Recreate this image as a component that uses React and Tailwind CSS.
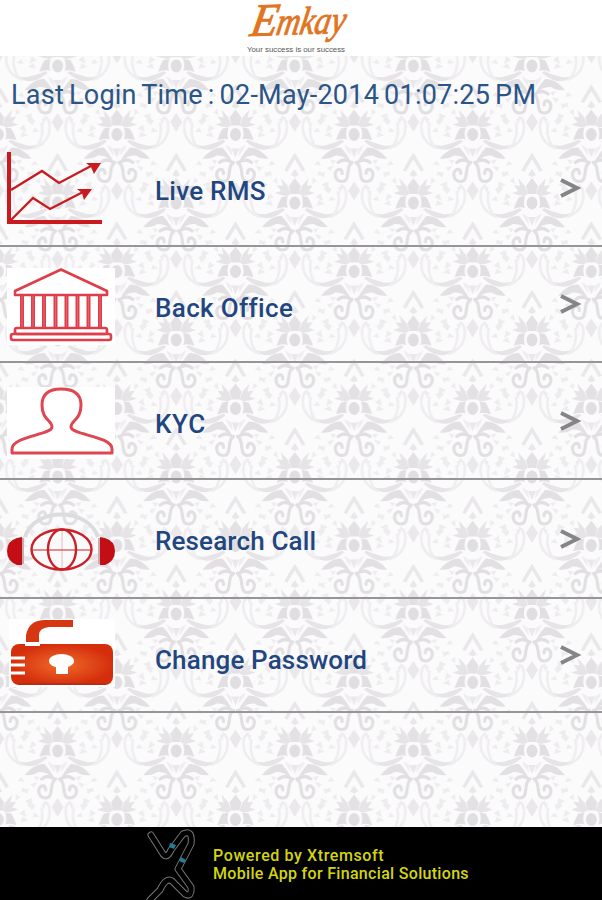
function Motif({ x, y }) {
    return (
        <g transform={`translate(${x} ${y})`}>
            <ellipse rx="5.5" ry="6.5" fill="#e0dee1" />
            <path d="M0-25 6-17 4-9H-4L-6-17Z" fill="#e3e1e4" />
            <path d="M-4 14H4L0 23ZM0 47 6 56 0 66-6 56Z" fill="#eae8eb" />
            <path d="M-9-32Q-5-39 0-47Q5-39 9-32" fill="none" stroke="#e9e7ea" strokeWidth="3.5" />
            <path d="M0-34 4-28 0-26-4-28Z" fill="#e9e7ea" />
            <MotifHalf />
            <g transform="scale(-1 1)">
                <MotifHalf />
            </g>
        </g>
    );
}

function MotifHalf() {
    return (
        <g>
            <path d="M-18 6Q-17 1-13-6L-7-7Q-9 0-7 5Q-12 3-18 6Z" fill="#e1dfe2" />
            <path d="M-20-10-14-12-18-18-12-17-14-25-7-17-4-9-8-7-14-8Z" fill="#e6e4e7" />
            <path d="M-1 32Q-5 22-13 13Q-23 12-33 24Q-25 25-19 21Q-11 20-5 27Z" fill="#e2e0e3" />
            <path d="M-2 28C-9 31-3 47-12 47C-19 47-21 38-16 35Q-12 34-12 39M-3 28Q-10 23-16 28" fill="none" stroke="#e1dfe2" strokeWidth="3.2" strokeLinecap="round" />
            <path d="M-10 7Q-16 12-21 14Q-34 18-41 9Q-34 13-26 10Q-18 8-12 5Z" fill="#e6e4e7" />
            <path d="M-35 14Q-49 9-51-3T-46-18M-40 10Q-46 0-43-12" fill="none" stroke="#efedf0" strokeWidth="2.6" />
            <path d="M-10 10-4 14-3 22-8 15Z" fill="#efedf0" />
            <path d="M-37-14-31-18-29-14-34-9ZM-27 33-20 31-24 37ZM-35 40-29 37-30 43ZM-29-30-24-32-23-27ZM-30 1-24-3-22 3ZM-26-10-21-6-28-2ZM-33 50-26 47-25 55ZM-16 53-11 51-14 59ZM-41-3-36-7-34-2ZM-40 30-36 26-33 31ZM-24 25-18 26-21 30ZM-22-22-18-26-17-19Z" fill="#eeecef" />
        </g>
    );
}

function Damask() {
    return (
        <svg className="absolute inset-0 h-full w-full" aria-hidden="true">
            <defs>
                <pattern id="damask" x="-61" y="10" width="118.6" height="137" patternUnits="userSpaceOnUse">
                    <Motif x={0} y={0} />
                    <Motif x={118.6} y={0} />
                    <Motif x={0} y={137} />
                    <Motif x={118.6} y={137} />
                    <Motif x={59.3} y={68.5} />
                    <Motif x={59.3} y={-68.5} />
                    <Motif x={59.3} y={205.5} />
                </pattern>
            </defs>
            <rect width="100%" height="100%" fill="#fcfbfc" />
            <rect width="100%" height="100%" fill="url(#damask)" />
        </svg>
    );
}

function ChartIcon() {
    return (
        <svg width="120" height="116" viewBox="0 0 120 116" fill="none" stroke="#c81a1f">
            <path d="M9 22V92H102" strokeWidth="4" />
            <path d="M11 60 42 41 59 53 91 36M10 91 33 68 50 79 83 62" strokeWidth="2.3" />
            <path d="M86 33 101 33 94 44 91 37ZM77 59 92 59 84 70 82 63Z" fill="#c81a1f" stroke="none" />
        </svg>
    );
}

function BankIcon() {
    return (
        <svg width="120" height="116" viewBox="0 0 120 116" fill="none" stroke="#df3d49">
            <path d="M7 21H115V98H7Z" fill="#fff" stroke="none" />
            <path d="M61 22.5 107 44V48H15V44Z" strokeWidth="2.6" strokeLinejoin="round" />
            <path d="M22 49V80M33 49V80M44 49V80M55.5 49V80M66.5 49V80M77.5 49V80M88.5 49V80M100 49V80" strokeWidth="4" />
            <path d="M22 49V80M33 49V80M44 49V80M55.5 49V80M66.5 49V80M77.5 49V80M88.5 49V80M100 49V80" stroke="#e5626b" strokeWidth="1.2" />
            <rect x="15" y="81" width="92" height="6" rx="2" strokeWidth="2.6" />
            <rect x="11" y="87" width="100" height="6" rx="2" strokeWidth="2.6" />
        </svg>
    );
}

function PersonIcon() {
    return (
        <svg width="120" height="116" viewBox="0 0 120 116" fill="none">
            <path d="M7 24H115V96H7Z" fill="#fff" />
            <path
                d="M61 26C48 26 42 32 42 42C42 57 52 57 52 64C52 72 12 73 12 86V90H112V86C112 73 71 72 71 64C71 57 81 57 81 42C81 32 75 26 61 26Z"
                stroke="#df4651"
                strokeWidth="3"
                strokeLinejoin="round"
            />
        </svg>
    );
}

function GlobeIcon() {
    return (
        <svg width="120" height="118" viewBox="0 0 120 118" fill="none">
            <path d="M25 57C34 27 88 27 98 57" stroke="#dcdcde" strokeWidth="4" />
            <g stroke="#c92127" strokeWidth="2.4">
                <ellipse cx="61.5" cy="69.5" rx="30" ry="20" fill="#fbfafb" />
                <ellipse cx="62" cy="69.5" rx="14" ry="20" />
                <path d="M32 70H92" strokeWidth="1.1" />
                <path d="M62 50V90" strokeWidth=".6" strokeOpacity=".5" />
            </g>
            <path d="M22 57V85H17Q7 81 7 71T17 58ZM100 57V85H105Q115 81 115 71T105 58Z" fill="#c30e16" />
            <path d="M23 58V84M99 58V84" stroke="#c5aeb1" strokeWidth="2" />
        </svg>
    );
}

function LockIcon() {
    return (
        <svg width="120" height="114" viewBox="0 0 120 114" fill="none">
            <defs>
                <radialGradient id="lockBody">
                    <stop stopColor="#ef6c28" />
                    <stop offset="1" stopColor="#d52e0d" />
                </radialGradient>
            </defs>
            <path d="M9 20H115V88H9Z" fill="#fff" />
            <rect x="11" y="45" width="102" height="41" rx="8" fill="url(#lockBody)" />
            <path d="M18 85H106" stroke="#b92c16" strokeWidth="2" />
            <path d="M25 43H40V47H25Z" fill="#fff" />
            <path d="M26 43V36Q29 21 45 21H73V28H49Q39 29 39 36V43Z" fill="#d63712" />
            <path d="M10 59H25M10 66H25M10 74H25" stroke="#fff" strokeWidth="3.2" />
            <ellipse cx="61.5" cy="62" rx="12.5" ry="7" fill="#fff" />
            <path d="M56 66H68V75H56Z" fill="#fff" />
        </svg>
    );
}

const menu = [
    { label: 'Live RMS', Icon: ChartIcon, row: 'h-[117px]', text: 'pt-[7px] tracking-[0.25px]' },
    { label: 'Back Office', Icon: BankIcon, row: 'h-[116px]', text: 'pt-2 tracking-[0.35px]' },
    { label: 'KYC', Icon: PersonIcon, row: 'h-[117px]', text: 'pt-[7px] tracking-[0.6px]' },
    { label: 'Research Call', Icon: GlobeIcon, row: 'h-[119px]', text: 'pt-1.5 tracking-[0.15px]' },
    { label: 'Change Password', Icon: LockIcon, row: 'h-[114px]', text: 'pt-2.5 tracking-[0.15px]' },
];

export default function App() {
    return (
        <div className="flex h-[900px] w-[602px] flex-col overflow-hidden bg-white font-[Roboto,sans-serif]">
            {/* Header */}
            <header className="flex h-14 shrink-0 justify-center bg-white">
                <svg width="120" height="56" viewBox="0 0 120 56" className="overflow-visible">
                    <g transform="translate(8 36) rotate(-2) skewX(-12)" fill="#e27420" stroke="#e27420" strokeWidth=".9" className="font-['Liberation_Serif',serif] italic">
                        <text x="0" y="0" textLength="27" lengthAdjust="spacingAndGlyphs" className="text-[46px]">E</text>
                        <text x="26" y="0" textLength="69" lengthAdjust="spacingAndGlyphs" className="text-[39px]">mkay</text>
                    </g>
                    <text x="6" y="52" textLength="98" lengthAdjust="spacingAndGlyphs" fill="#555" className="font-['Liberation_Sans',sans-serif] text-[7px]">Your success is our success</text>
                </svg>
            </header>

            {/* Menu */}
            <main className="relative flex-1">
                <Damask />
                <div className="relative">
                    <p className="flex h-[74px] items-center pt-1 pl-[11px] text-[27px] tracking-[0.25px] whitespace-nowrap text-[#2b5587] [word-spacing:-2px]">
                        Last Login Time : 02-May-2014 01:07:25 PM
                    </p>
                    <ul>
                        {menu.map(({ label, Icon, row, text }) => (
                            <li key={label} className={`flex items-center border-b-2 border-[#969597] ${row}`}>
                                <span className="h-full w-[155px] shrink-0 overflow-hidden"><Icon /></span>
                                <span className={`flex-1 text-[26px] font-medium whitespace-nowrap text-[#1f4680] ${text}`}>{label}</span>
                                <svg width="22" height="22" viewBox="0 0 22 22" className="mr-5" fill="none">
                                    <path d="M1 3 17 11 1 19" stroke="#858487" strokeWidth="4" />
                                </svg>
                            </li>
                        ))}
                    </ul>
                </div>
            </main>

            {/* Footer */}
            <footer className="flex h-[73px] shrink-0 bg-black">
                <svg width="60" height="73" viewBox="0 0 60 73" className="ml-[142px]" fill="none">
                    <g strokeLinejoin="round" strokeLinecap="round">
                        <path d="M9 8 21 27Q25 32 29 23L41 7Q51 2 49 17L36 42 49 60Q50 71 43 67L30 54Q24 50 18 63L8 73" stroke="#777" strokeWidth="7" />
                        <path d="M9 8 21 27Q25 32 29 23L41 7Q51 2 49 17L36 42 49 60Q50 71 43 67L30 54Q24 50 18 63L8 73" stroke="#000" strokeWidth="5" />
                    </g>
                    <path d="M28 16 34 18 32 22 27 20ZM39 30 44 33 42 36 37 34Z" fill="#237e9b" />
                </svg>
                <div className="ml-[11px] pt-5 text-[16px] leading-[18px] font-medium whitespace-nowrap text-[#d3d610]">
                    <p className="tracking-[0.6px]">Powered by Xtremsoft</p>
                    <p className="tracking-[0.31px]">Mobile App for Financial Solutions</p>
                </div>
            </footer>
        </div>
    );
}
